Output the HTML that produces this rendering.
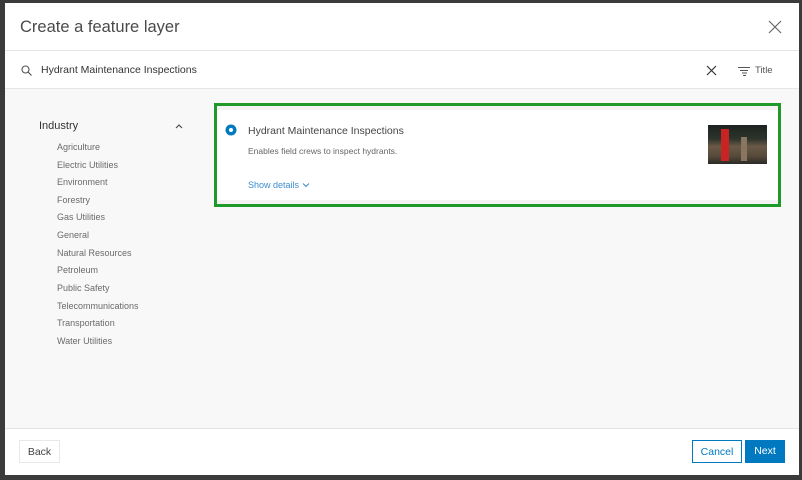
<!DOCTYPE html>
<html><head><meta charset="utf-8"><style>
*{margin:0;padding:0;box-sizing:border-box}
body{width:802px;height:480px;background:#3b3b3b;font-family:"Liberation Sans",sans-serif;position:relative;overflow:hidden}
.dlg{position:absolute;left:5px;top:3px;width:794px;height:472px;background:#fff}
.hdr{position:absolute;left:0;top:0;width:794px;height:48px;border-bottom:1px solid #e4e4e4}
.hdr h1{position:absolute;left:15px;top:15px;font-size:16.5px;font-weight:normal;color:#4a4a4a}
.srch{position:absolute;left:0;top:49px;width:794px;height:37px;border-bottom:1px solid #e6e6e6}
.srch .t{position:absolute;left:36px;top:12px;font-size:10.5px;color:#333}
.content{position:absolute;left:0;top:86px;width:794px;height:340px;background:#f8f8f8;border-bottom:1px solid #e4e4e4}
.side{position:absolute;left:34px;top:31px}
.side .h{font-size:11px;color:#333}
.side .i{position:absolute;left:18px;font-size:9px;color:#6a6a6a;white-space:nowrap}
.card{position:absolute;left:209px;top:14px;width:567px;height:104px;border:3px solid #1f9a2a;background:#f3f3f3}
.card .in{position:absolute;left:0;top:4px;right:0;bottom:4px;background:#fff}
.ft{position:absolute;left:0;top:427px;width:794px;height:45px}
.btn{position:absolute;top:10px;height:23px;font-size:10.5px;line-height:23px;text-align:center}
</style></head><body>
<div class="dlg">
 <div class="hdr"><h1>Create a feature layer</h1>
  <svg style="position:absolute;left:763px;top:17px" width="14" height="14"><path d="M1 1L13 13M13 1L1 13" stroke="#666" stroke-width="1.2"/></svg></div>
 <div class="srch">
  <svg style="position:absolute;left:16px;top:13px" width="11" height="11"><circle cx="4.5" cy="4.5" r="3.5" fill="none" stroke="#555" stroke-width="1.1"/><path d="M7 7L10.5 10.5" stroke="#555" stroke-width="1.2"/></svg>
  <div class="t">Hydrant Maintenance Inspections</div>
  <svg style="position:absolute;left:701px;top:13px" width="11" height="11"><path d="M1 1L10 10M10 1L1 10" stroke="#333" stroke-width="1.2"/></svg>
  <svg style="position:absolute;left:733px;top:14px" width="12" height="10"><path d="M0 1.5H12M2 4.5H10M4 7H9M5 9.5H8" stroke="#555" stroke-width="1"/></svg>
  <div style="position:absolute;left:750px;top:13px;font-size:9.5px;color:#555">Title</div>
 </div>
 <div class="content">
  <div class="side">
   <div class="h">Industry</div>
   <svg style="position:absolute;left:136px;top:3px" width="8" height="6"><path d="M1 5L4 2L7 5" fill="none" stroke="#444" stroke-width="1.1"/></svg>
   <div class="i" style="top:22px">Agriculture</div>
   <div class="i" style="top:40px">Electric Utilities</div>
   <div class="i" style="top:57px">Environment</div>
   <div class="i" style="top:75px">Forestry</div>
   <div class="i" style="top:92px">Gas Utilities</div>
   <div class="i" style="top:110px">General</div>
   <div class="i" style="top:128px">Natural Resources</div>
   <div class="i" style="top:145px">Petroleum</div>
   <div class="i" style="top:163px">Public Safety</div>
   <div class="i" style="top:181px">Telecommunications</div>
   <div class="i" style="top:198px">Transportation</div>
   <div class="i" style="top:216px">Water Utilities</div>
  </div>
  <div class="card"><div class="in">
   <svg style="position:absolute;left:8px;top:14px" width="12" height="12"><circle cx="6" cy="6" r="5.5" fill="#0079c1"/><circle cx="6" cy="6" r="2" fill="#fff"/></svg>
   <div style="position:absolute;left:31px;top:15px;font-size:10.5px;color:#444">Hydrant Maintenance Inspections</div>
   <div style="position:absolute;left:31px;top:36px;font-size:8.5px;color:#666">Enables field crews to inspect hydrants.</div>
   <div style="position:absolute;left:31px;top:70px;font-size:9px;color:#3d8ed0">Show details <svg width="8" height="6"><path d="M1 1.5L4 4.5L7 1.5" fill="none" stroke="#3d8ed0" stroke-width="1"/></svg></div>
   <div style="position:absolute;left:491px;top:15px;width:59px;height:39px;background:linear-gradient(180deg,#1e2320 0%,#2c332b 35%,#6a5a46 55%,#574a3a 80%,#2a2a26 100%)">
    <div style="position:absolute;left:13px;top:4px;width:8px;height:32px;background:#c92424"></div>
    <div style="position:absolute;left:33px;top:12px;width:6px;height:24px;background:#8a7660"></div>
   </div>
  </div></div>
 </div>
 <div class="ft">
  <div class="btn" style="left:14px;width:41px;border:1px solid #e8e8e8;color:#444">Back</div>
  <div class="btn" style="left:687px;width:50px;border:1px solid #0079c1;color:#0079c1">Cancel</div>
  <div class="btn" style="left:740px;width:40px;background:#0079c1;color:#fff">Next</div>
 </div>
</div>
</body></html>
